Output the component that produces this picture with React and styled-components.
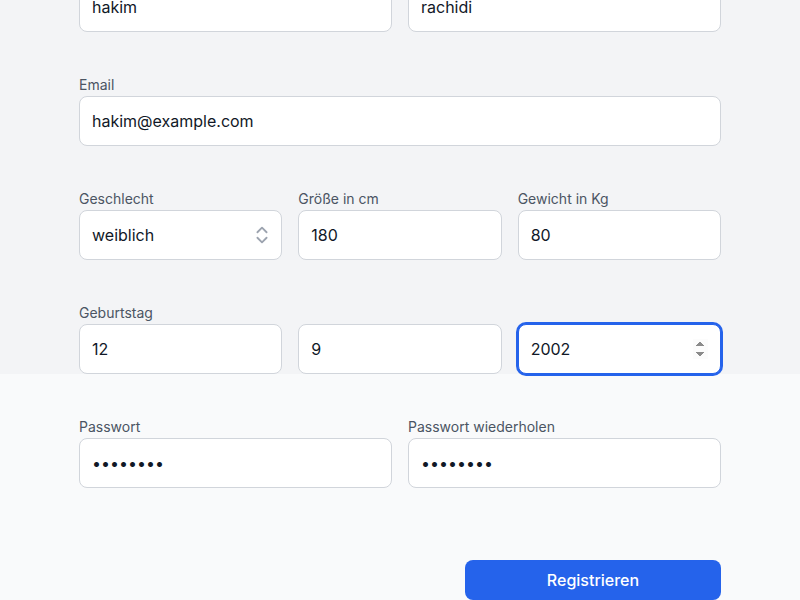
import React from "react";
import styled, { createGlobalStyle } from "styled-components";
import { ChevronsUpDown } from "lucide-react";

const Global = createGlobalStyle`
  html, body { margin: 0; padding: 0; }
  body {
    background: #f9fafb;
    font-family: Inter, "Noto Sans", "Liberation Sans", sans-serif;
    overflow: hidden;
  }
  * { box-sizing: border-box; }
`;

const Page = styled.div`
  min-height: 600px;
  background: #f9fafb;
`;

const Section = styled.section`
  background: ${(p) => p.$bg};
  padding: ${(p) => p.$pad};
`;

const Inner = styled.div`
  width: 642px;
  margin: 0 auto;
  display: flex;
  flex-direction: column;
  gap: 44px;
  margin-top: ${(p) => p.$offset || 0}px;
`;

const Grid = styled.div`
  display: grid;
  grid-template-columns: repeat(${(p) => p.$cols}, 1fr);
  gap: 16px;
`;

const Field = styled.div`
  display: flex;
  flex-direction: column;
`;

const Label = styled.label`
  font-size: 14px;
  line-height: 18px;
  margin-bottom: 2px;
  color: #4b5563;
`;

const Input = styled.input`
  height: 50px;
  width: 100%;
  padding: 12px;
  border: 1px solid #d1d5db;
  border-radius: 8px;
  background: #fff;
  font-family: inherit;
  font-size: 16px;
  line-height: 24px;
  color: #111827;
  outline: none;
  &:focus {
    border-color: #2563eb;
    box-shadow: 0 0 0 2px #2563eb;
  }
`;

const SelectWrap = styled.div`
  position: relative;
`;

const Select = styled.select`
  appearance: none;
  height: 50px;
  width: 100%;
  padding: 0 40px 0 12px;
  border: 1px solid #d1d5db;
  border-radius: 8px;
  background: #fff;
  font-family: inherit;
  font-size: 16px;
  color: #111827;
  outline: none;
`;

const SelectIcon = styled.span`
  position: absolute;
  right: 9px;
  top: 50%;
  transform: translateY(-50%);
  display: flex;
  color: #9ca3af;
  pointer-events: none;
`;

const Actions = styled.div`
  display: flex;
  justify-content: flex-end;
  padding-top: 72px;
`;

const Button = styled.button`
  width: 256px;
  height: 40px;
  border: none;
  border-radius: 8px;
  background: #2563eb;
  color: #fff;
  font-family: inherit;
  font-size: 16px;
  font-weight: 500;
  cursor: pointer;
`;

const TextField = ({ label, ...rest }) => (
  <Field>
    <Label>{label}</Label>
    <Input {...rest} />
  </Field>
);

export default function App() {
  return (
    <Page>
      <Global />
      <Section $bg="#f3f4f6" $pad="0">
        <Inner $offset={-38}>
          <Grid $cols={2}>
            <TextField label="Vorname" defaultValue="hakim" />
            <TextField label="Nachname" defaultValue="rachidi" />
          </Grid>
          <TextField label="Email" type="email" defaultValue="hakim@example.com" />
          <Grid $cols={3}>
            <Field>
              <Label>Geschlecht</Label>
              <SelectWrap>
                <Select defaultValue="weiblich">
                  <option value="männlich">männlich</option>
                  <option value="weiblich">weiblich</option>
                  <option value="divers">divers</option>
                </Select>
                <SelectIcon>
                  <ChevronsUpDown size={22} strokeWidth={2} />
                </SelectIcon>
              </SelectWrap>
            </Field>
            <TextField label="Größe in cm" type="number" defaultValue="180" />
            <TextField label="Gewicht in Kg" type="number" defaultValue="80" />
          </Grid>
          <Field>
            <Label>Geburtstag</Label>
            <Grid $cols={3}>
              <Input type="number" defaultValue="12" placeholder="Tag" />
              <Input type="number" defaultValue="9" placeholder="Monat" />
              <Input type="number" defaultValue="2002" placeholder="Jahr" autoFocus />
            </Grid>
          </Field>
        </Inner>
      </Section>
      <Section $bg="#f9fafb" $pad="44px 0 0">
        <Inner>
          <Grid $cols={2}>
            <TextField label="Passwort" type="password" defaultValue="12345678" />
            <TextField label="Passwort wiederholen" type="password" defaultValue="12345678" />
          </Grid>
        </Inner>
        <Inner>
          <Actions>
            <Button type="button">Registrieren</Button>
          </Actions>
        </Inner>
      </Section>
    </Page>
  );
}
